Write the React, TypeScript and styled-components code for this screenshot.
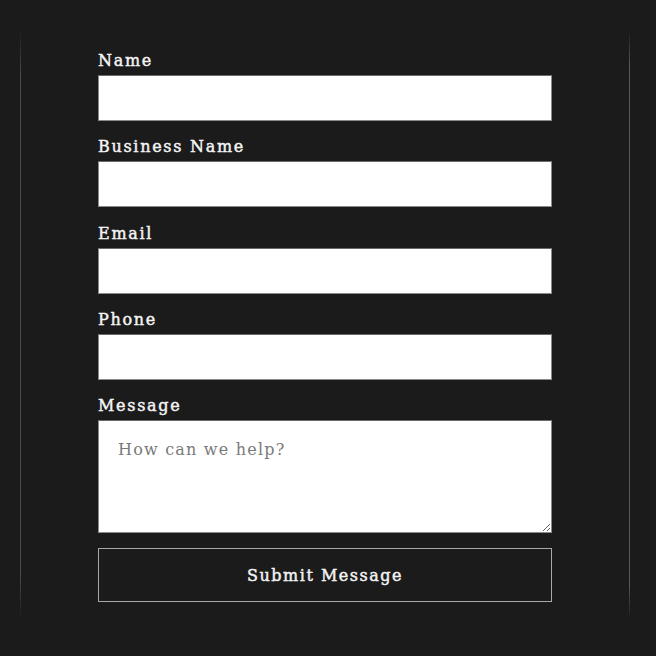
import React from "react";
import styled, { createGlobalStyle } from "styled-components";

const GlobalStyle = createGlobalStyle`
    html, body {
        margin: 0;
        padding: 0;
        background: #1b1b1b;
    }
    * {
        box-sizing: border-box;
    }
`;

const Page = styled.div`
    width: 656px;
    height: 656px;
    padding: 30px 0 0 20px;
`;

const Frame = styled.div`
    width: 610px;
    height: 590px;
    padding: 20px 0 0 78px;
    background-image:
        linear-gradient(to bottom, rgba(90, 90, 90, 0) 0%, #4d4d4d 8%, #4d4d4d 92%, rgba(90, 90, 90, 0) 100%),
        linear-gradient(to bottom, rgba(90, 90, 90, 0) 0%, #585858 6%, #585858 94%, rgba(90, 90, 90, 0) 100%);
    background-size: 1px 100%, 1px 100%;
    background-position: left top, right top;
    background-repeat: no-repeat;
`;

const Form = styled.form`
    width: 454px;
    display: flex;
    flex-direction: column;
    gap: 15.3px;
`;

const Field = styled.div`
    display: flex;
    flex-direction: column;
    gap: 4px;
`;

const Label = styled.label`
    padding-top: 1px;
    font-family: "DejaVu Serif", serif;
    font-size: 16px;
    letter-spacing: 1.7px;
    line-height: 20px;
    color: #f4f4f4;
    -webkit-text-stroke: 0.45px #f4f4f4;
`;

const Input = styled.input`
    height: 46px;
    width: 100%;
    background: #fff;
    border: 1px solid #8a8a8a;
    border-top-color: #6a6a6a;
    outline: none;
    padding: 0 18px;
    font-family: "DejaVu Serif", serif;
    font-size: 16px;
`;

const TextArea = styled.textarea`
    height: 113px;
    width: 100%;
    background: #fff;
    border: 1px solid #8a8a8a;
    border-top-color: #6a6a6a;
    outline: none;
    padding: 19px 19px;
    font-family: "DejaVu Serif", serif;
    font-size: 16px;
    letter-spacing: 1.2px;
    display: block;

    &::placeholder {
        color: #7a7a7a;
    }
`;

const SubmitButton = styled.button`
    height: 54px;
    width: 100%;
    background: transparent;
    border: 1px solid #a8a8a8;
    color: #f4f4f4;
    font-family: "DejaVu Serif", serif;
    font-size: 16px;
    letter-spacing: 1.5px;
    -webkit-text-stroke: 0.45px #f4f4f4;
    cursor: pointer;
`;

const fields = ["Name", "Business Name", "Email", "Phone"];

export default function App() {
    return (
        <Page>
            <GlobalStyle />
            <Frame>
                <Form onSubmit={(e) => e.preventDefault()}>
                    {fields.map((f) => (
                        <Field key={f}>
                            <Label>{f}</Label>
                            <Input type="text" />
                        </Field>
                    ))}
                    <Field>
                        <Label>Message</Label>
                        <TextArea placeholder="How can we help?" />
                    </Field>
                    <SubmitButton type="submit">Submit Message</SubmitButton>
                </Form>
            </Frame>
        </Page>
    );
}
